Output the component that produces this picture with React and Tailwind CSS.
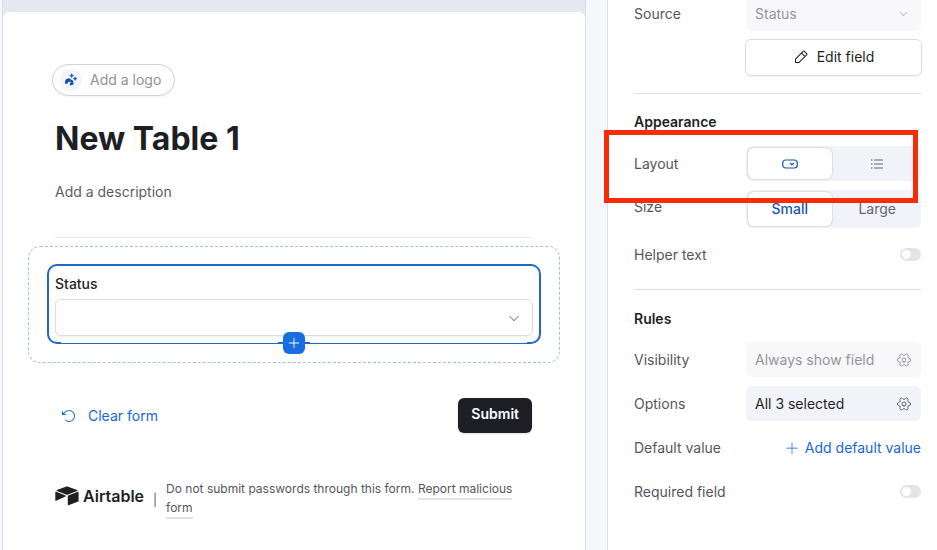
"use client";

import { useState } from "react";
import { Settings } from "lucide-react";
import {
  PiArrowCounterClockwise,
  PiCaretDown,
  PiListBullets,
  PiPencilSimple,
  PiPlus,
  PiPlusLight,
} from "react-icons/pi";

function LogoBadge() {
  return (
    <span className="flex size-[22px] items-center justify-center rounded-full bg-[#f1f5ff] text-[#1d4fa8]">
      <svg viewBox="0 0 14 14" className="size-3.5" fill="currentColor" aria-hidden="true">
        <path d="M1 10.800V8.400C1.300 6.400 3.400 5.200 5.600 5.300c.6.800 1.400 1.500 2.700 1.800.8.800 1.200 1.700 1.200 2.600v1.800l-3.400.9-.3-2.200 1.700-1.100-3-.3-1.100 2z" />
        <path d="M7.700.6 8.300 2.100l1.500.6-1.500.6-.6 1.500-.6-1.500-1.500-.6 1.500-.6z" stroke="currentColor" strokeWidth=".4" />
        <path d="m11.100 3.700.6 1.400 1.400.6-1.400.6-.6 1.400-.6-1.400-1.400-.6 1.400-.6z" stroke="currentColor" strokeWidth=".4" />
      </svg>
    </span>
  );
}

function AirtableMark() {
  return (
    <svg viewBox="0 0 24 20" className="h-5 w-6 shrink-0" fill="currentColor" aria-hidden="true">
      <path d="M10.800.7c.7-.3 1.600-.3 2.300 0l9 3.300c.5.200.5.800 0 1l-9 3.500c-.7.300-1.500.3-2.200 0L1.900 5c-.5-.2-.5-.8 0-1z" />
      <path d="M12.800 10.100v8.700c0 .4.400.7.800.5l9.600-3.700c.2-.1.400-.3.400-.6V6.300c0-.4-.4-.7-.8-.5l-9.600 3.700c-.2.100-.4.300-.4.600z" />
      <path d="m10.500 10.500-9.300 4.300c-.4.200-.9-.1-.9-.5V6.400c0-.4.500-.8.900-.6l9.300 3.600c.5.200.5.900 0 1.100z" />
    </svg>
  );
}

function FieldRow({ label, children }) {
  return (
    <div className="flex h-[35px] items-center justify-between">
      <span className="text-[#54565c]">{label}</span>
      {children}
    </div>
  );
}

function Toggle({ label }) {
  return (
    <label className="flex h-[35px] cursor-pointer items-center justify-between text-[#54565c]">
      {label}
      <input type="checkbox" role="switch" className="peer sr-only" />
      <span className="flex h-[13px] w-[21px] items-center rounded-full bg-[#e4e4e5] px-[2px] peer-checked:justify-end peer-checked:bg-[#166ee1]">
        <span className="size-[9px] rounded-full bg-white"></span>
      </span>
    </label>
  );
}

function Segment({ active, onClick, label, children }) {
  return (
    <button
      type="button"
      aria-label={label}
      aria-pressed={active}
      onClick={onClick}
      className={
        active
          ? "flex flex-1 items-center justify-center rounded-md bg-white font-medium text-[#1a55ad] shadow-[0_0_2px_rgba(0,0,0,0.3)]"
          : "flex flex-1 items-center justify-center rounded-md text-[#616670]"
      }
    >
      {children}
    </button>
  );
}

function FormPreview() {
  return (
    <section className="flex flex-1 flex-col border-x border-[#dcdee8] bg-[#e3e8f1]">
      <form
        className="mt-3 flex-1 rounded-t-md bg-white pt-[52px] pr-[25px] pl-[25px]"
        onSubmit={(e) => e.preventDefault()}
      >
        <header className="pr-[28px] pl-[27px]">
          <button
            type="button"
            className="-ml-[3px] flex h-8 items-center gap-2 rounded-full border border-[#d2d3d6] bg-white pr-[13px] pl-[7px] text-sm text-[#8f9094] shadow-xs"
          >
            <LogoBadge />
            Add a logo
          </button>
          <h1 className="mt-5 text-[32px] leading-[46px] font-bold text-[#1d1f25]">
            New Table 1
          </h1>
          <p className="mt-5 border-b border-[#ebebed] pb-[35px] text-sm text-[#5b5d66]">
            Add a description
          </p>
        </header>

        <div className="mt-2 rounded-xl border border-dashed border-[#9dc0e4] px-[18px] pt-[17px] pb-[18px]">
          <div className="relative rounded-[10px] border-2 border-[#2068c3] px-[6px] pt-[6px] pb-[6px]">
            <label htmlFor="status" className="block text-sm leading-6 font-medium text-[#1d1f25]">
              Status
            </label>
            <div className="relative mt-[3px]">
              <select
                id="status"
                className="block h-[37px] w-full appearance-none rounded-md border border-[#dddddf] bg-white px-3 text-sm shadow-xs"
              >
                <option value=""></option>
                <option>Todo</option>
                <option>In progress</option>
                <option>Done</option>
              </select>
              <PiCaretDown className="pointer-events-none absolute top-3 right-3 size-[14px] text-[#777a80]" />
            </div>
            <span className="absolute right-3 -bottom-px left-3 h-px bg-white"></span>
            <span className="absolute -bottom-[2px] left-1/2 h-[2px] w-8 -translate-x-1/2 bg-[#2068c3]"></span>
            <button
              type="button"
              aria-label="Add field"
              className="absolute -bottom-3 left-1/2 flex size-[22px] -translate-x-1/2 items-center justify-center rounded-md bg-[#166ee1] text-white"
            >
              <PiPlus className="size-3.5" />
            </button>
          </div>
        </div>

        <div className="mt-[35px] flex items-center justify-between pr-[28px] pl-[27px] text-sm">
          <button type="reset" className="flex items-center gap-[11px] pl-[6px] text-[#1768d2]">
            <PiArrowCounterClockwise className="size-4" />
            Clear form
          </button>
          <button
            type="submit"
            className="h-[35px] rounded-md bg-[#1d1f25] px-[13px] pb-[3px] font-semibold text-white shadow-sm"
          >
            Submit
          </button>
        </div>

        <footer className="mt-[46px] flex items-center pr-[28px] pl-[27px] text-[#1d1f25]">
          <div className="flex items-center gap-1 pb-1">
            <AirtableMark />
            <span className="text-base leading-6 font-semibold">Airtable</span>
          </div>
          <span className="mx-[9px] pt-1 text-xs text-[#54565c]">|</span>
          <p className="text-xs leading-[19px] text-[#54565c]">
            Do not submit passwords through this form.{" "}
            <a href="#report" className="border-b-2 border-[#e3e3e5] pb-[2px]">
              Report malicious form
            </a>
          </p>
        </footer>
      </form>
    </section>
  );
}

function FieldSettings() {
  const [layout, setLayout] = useState("dropdown");
  const [size, setSize] = useState("small");

  return (
    <aside className="w-[330px] shrink-0 border-l border-[#dcdee8] bg-white pr-4 pl-[26px] text-sm">
      <section className="border-b border-[#e0e0e2] pb-[17px]">
        <div className="flex h-[31px] justify-between">
          <label htmlFor="source" className="leading-7 text-[#54565c]">
            Source
          </label>
          <div className="relative w-[175px]">
            <select
              id="source"
              disabled
              className="h-full w-full appearance-none rounded-b-md bg-[#f8f8fb] px-[9px] pb-[3px] text-[#949599] opacity-100"
            >
              <option>Status</option>
            </select>
            <PiCaretDown className="absolute top-2 right-3 size-[11px] text-[#a5a6aa]" />
          </div>
        </div>
        <button
          type="button"
          className="mt-2 -mr-px ml-auto flex h-[37px] w-[177px] items-center justify-center gap-2 rounded-md border border-[#dcdcdf] pb-[2px] text-[#1d1f25] shadow-xs"
        >
          <PiPencilSimple className="size-4" />
          Edit field
        </button>
      </section>

      <section className="border-b border-[#e0e0e2] pb-[17px]">
        <h2 className="pt-[18px] font-semibold text-[#1d1f25]">Appearance</h2>
        <div className="relative mt-[14px]">
          <FieldRow label="Layout">
            <div className="flex h-[35px] w-[175px] gap-1 rounded-md bg-[#f2f3f8] p-[2px]">
              <Segment
                label="Dropdown"
                active={layout === "dropdown"}
                onClick={() => setLayout("dropdown")}
              >
                <svg
                  viewBox="0 0 16 16"
                  className="size-4"
                  fill="none"
                  stroke="currentColor"
                  strokeWidth="1.2"
                  strokeLinecap="round"
                  strokeLinejoin="round"
                  aria-hidden="true"
                >
                  <rect x="0.7" y="4" width="14.6" height="8" rx="3" />
                  <path d="m8.300 7.300 1.600 1.500 1.600-1.500" />
                </svg>
              </Segment>
              <Segment label="List" active={layout === "list"} onClick={() => setLayout("list")}>
                <PiListBullets className="size-4" />
              </Segment>
            </div>
          </FieldRow>
          <div className="pointer-events-none absolute -top-4 right-[3px] -bottom-[22px] -left-[30px] z-10 border-5 border-[#f62b08]"></div>
        </div>
        <div className="mt-[9px] flex h-[38px] justify-between">
          <span className="leading-[34px] text-[#54565c]">Size</span>
          <div className="flex w-[175px] gap-1 rounded-md bg-[#f2f3f8] p-[2px]">
            <Segment active={size === "small"} onClick={() => setSize("small")}>
              Small
            </Segment>
            <Segment active={size === "large"} onClick={() => setSize("large")}>
              Large
            </Segment>
          </div>
        </div>
        <div className="mt-[9px]">
          <Toggle label="Helper text" />
        </div>
      </section>

      <section className="flex flex-col gap-[9px] pb-6">
        <h2 className="pt-[19px] pb-1 font-semibold text-[#1d1f25]">Rules</h2>
        <FieldRow label="Visibility">
          <button
            type="button"
            disabled
            className="flex h-[35px] w-[175px] items-center justify-between rounded-md bg-[#f8f8fb] px-[9px] text-[#949599]"
          >
            Always show field
            <Settings className="size-4 rotate-90" strokeWidth={1.5} />
          </button>
        </FieldRow>
        <FieldRow label="Options">
          <button
            type="button"
            className="flex h-[35px] w-[175px] items-center justify-between rounded-md bg-[#f2f3f8] px-[9px] text-[#1d1f25]"
          >
            All 3 selected
            <Settings className="size-4 rotate-90 text-[#616670]" strokeWidth={1.5} />
          </button>
        </FieldRow>
        <FieldRow label="Default value">
          <button type="button" className="flex items-center gap-[5px] text-[#1768d2]">
            <PiPlusLight className="size-4" />
            Add default value
          </button>
        </FieldRow>
        <Toggle label="Required field" />
      </section>
    </aside>
  );
}

export default function App() {
  return (
    <main className="flex min-h-screen bg-[#f6f7fb] pl-[2px] font-['Inter',sans-serif]">
      <FormPreview />
      <div className="w-[21px] shrink-0"></div>
      <FieldSettings />
    </main>
  );
}
